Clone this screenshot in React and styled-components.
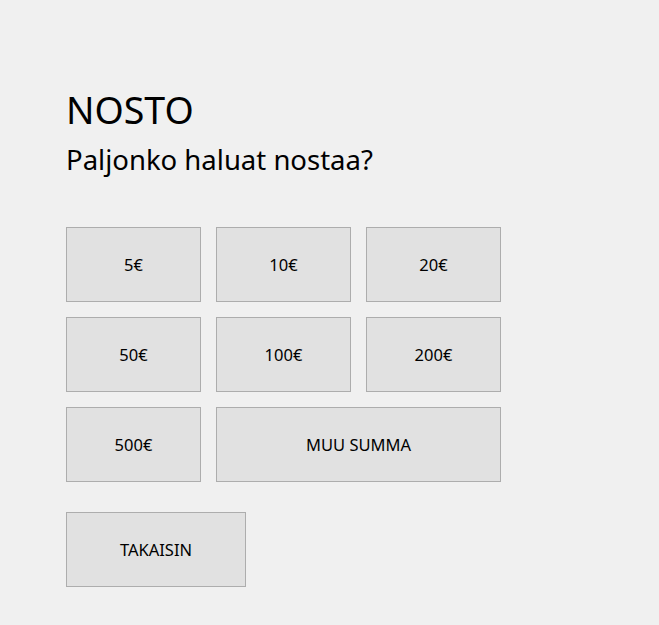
import React from 'react'
import styled, { createGlobalStyle } from 'styled-components'

const GlobalStyle = createGlobalStyle`
	html, body {
		margin: 0;
		padding: 0;
		background: #f0f0f0;
	}
	body {
		font-family: "Noto Sans", "Open Sans", sans-serif;
		color: #000;
	}
`

const Page = styled.div`
	width: 659px;
	height: 625px;
	padding: 86px 0 0 66px;
	box-sizing: border-box;
	background: #f0f0f0;
`

const Title = styled.h1`
	margin: 0;
	font-size: 37.5px;
	font-weight: 400;
	line-height: 48px;
`

const Question = styled.h2`
	margin: 8px 0 0 0;
	font-size: 27.5px;
	font-weight: 400;
	line-height: 36px;
	letter-spacing: 0;
`

const AmountGrid = styled.div`
	display: grid;
	grid-template-columns: repeat(3, 135px);
	grid-auto-rows: 75px;
	gap: 15px;
	margin-top: 49px;
`

const Button = styled.button`
	box-sizing: border-box;
	width: ${p => p.$width || 'auto'};
	height: 75px;
	grid-column: ${p => p.$span ? `span ${p.$span}` : 'auto'};
	background: #e1e1e1;
	border: 1px solid #adadad;
	border-radius: 0;
	padding: 0;
	font-family: "Noto Sans", "Open Sans", sans-serif;
	font-size: 16.5px;
	color: #000;
	cursor: pointer;
	&:hover {
		background: #e5f1fb;
		border-color: #0078d7;
	}
`

const Footer = styled.div`
	margin-top: 30px;
`

const amounts = ['5€', '10€', '20€', '50€', '100€', '200€', '500€']

const App = () => {
	return (
		<Page>
			<GlobalStyle />
			<Title>NOSTO</Title>
			<Question>Paljonko haluat nostaa?</Question>
			<AmountGrid>
				{amounts.map(a => (
					<Button key={a}>{a}</Button>
				))}
				<Button $span={2}>MUU SUMMA</Button>
			</AmountGrid>
			<Footer>
				<Button $width="180px">TAKAISIN</Button>
			</Footer>
		</Page>
	)
}

export default App
